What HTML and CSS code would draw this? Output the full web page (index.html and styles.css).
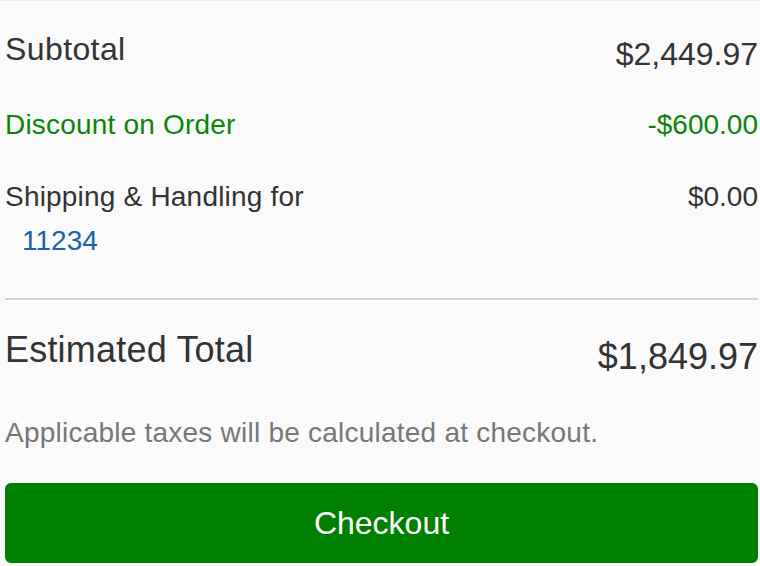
FILE: index.html
```html
<!DOCTYPE html>
<html lang="en">

<head>
  <meta charset="UTF-8">
  <meta name="viewport" content="width=device-width, initial-scale=1.0">
  <title>Order Summary</title>
  <link rel="stylesheet" href="styles.css">
</head>

<body>
  <div class="summary">
    <div class="row row-subtotal">
      <span class="label">Subtotal</span>
      <span class="value">$2,449.97</span>
    </div>

    <div class="row row-discount">
      <span class="label">Discount on Order</span>
      <span class="value">-$600.00</span>
    </div>

    <div class="row row-shipping">
      <span class="label">Shipping &amp; Handling for<br><a class="zip-link" href="#">11234</a></span>
      <span class="value">$0.00</span>
    </div>

    <div class="divider"></div>

    <div class="row row-total">
      <span class="label">Estimated Total</span>
      <span class="value">$1,849.97</span>
    </div>

    <p class="tax-note">Applicable taxes will be calculated at checkout.</p>

    <button class="checkout-button">Checkout</button>
  </div>
</body>

</html>
```

FILE: styles.css
```css
body {
  font-family: "Liberation Sans", Arial, sans-serif;
  margin: 0;
  background-color: #fafafa;
  color: #333;
}

.summary {
  border-top: 1px solid #ececec;
  padding: 27px 2px 0 5px;
}

.row {
  display: flex;
  justify-content: space-between;
  align-items: flex-start;
}

.label {
  letter-spacing: 0.2px;
}

.row-subtotal {
  font-size: 32px;
  line-height: 40px;
}

.row-subtotal .label {
  margin-top: 1px;
  letter-spacing: 0.4px;
}

.row-subtotal .value {
  margin-top: 6px;
}

.row-discount {
  margin-top: 34px;
  font-size: 28px;
  line-height: 34px;
  color: #0a850a;
}

.row-shipping {
  margin-top: 33px;
  font-size: 28px;
  line-height: 44px;
}

.zip-link {
  display: inline-block;
  padding-left: 17px;
  color: #1a62aa;
  text-decoration: none;
  letter-spacing: 0;
}

.divider {
  margin-top: 35px;
  border-top: 2px solid #d2d2d2;
}

.row-total {
  margin-top: 28px;
  font-size: 36px;
  line-height: 44px;
}

.row-total .value {
  margin-top: 7px;
}

.tax-note {
  margin: 37px 0 0;
  font-size: 28px;
  line-height: 34px;
  letter-spacing: 0.23px;
  color: #777;
}

.checkout-button {
  display: block;
  width: 100%;
  height: 80px;
  margin-top: 33px;
  background-color: #008000;
  color: white;
  border: none;
  border-radius: 6px;
  font-family: inherit;
  font-size: 32px;
  cursor: pointer;
}
```
